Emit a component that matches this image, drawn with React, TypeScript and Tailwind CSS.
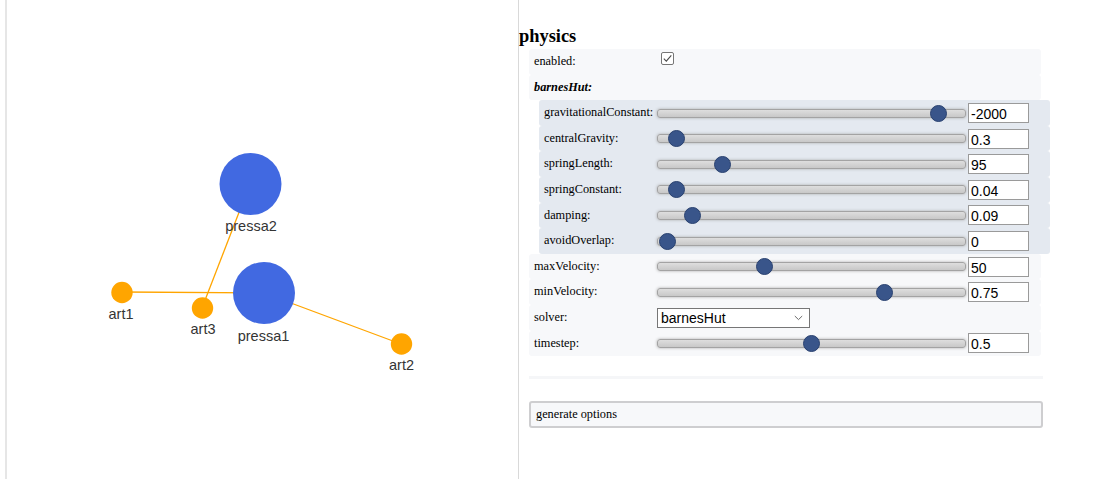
import React from "react";

type Lvl = 1 | 2;

function Row({ level, label, children }: { level: Lvl; label: React.ReactNode; children?: React.ReactNode }) {
  const outer =
    level === 2
      ? "ml-[20px] w-[511px] h-[25.6px] pl-[5px] flex items-center rounded-[3px] bg-[#e4e9f0]"
      : "ml-[10px] w-[512px] h-[25.6px] pl-[5px] flex items-center rounded-[3px] bg-[#f7f8fa]";
  const lab = level === 2 ? "w-[113px] shrink-0 whitespace-nowrap" : "w-[123px] shrink-0 whitespace-nowrap";
  return (
    <div className={outer}>
      <div className={lab}>{label}</div>
      {children}
    </div>
  );
}

function Slider({ center, value }: { center: number; value: string }) {
  const left = center - 657 - 8.5;
  return (
    <div className="flex items-center">
      <div className="relative w-[309px] h-[20px] flex items-center">
        <div className="w-full h-[9px] rounded-[3px] border border-[#a3a3a3] bg-gradient-to-b from-[#dedede] to-[#c8c8c8] shadow-[0_0_3px_0_#aaaaaa]" />
        <div
          className="absolute top-[1.5px] w-[17px] h-[17px] rounded-full bg-[#39558a] border border-[#2a4270]"
          style={{ left }}
        />
      </div>
      <div className="ml-[2px] w-[61px] h-[20px] border border-[#9a9a9a] bg-white pl-[2px] pt-[2px] flex items-center font-['Liberation_Sans',Arial,sans-serif] text-[14px] text-black leading-none">
        {value}
      </div>
    </div>
  );
}

function Checkbox() {
  return (
    <div className="ml-[4px] mb-[7px] w-[13px] h-[13px] rounded-[2px] border border-[#767676] bg-white flex items-center justify-center">
      <svg width="11" height="11" viewBox="0 0 11 11">
        <path d="M1.8 5.6 L4.3 8.1 L9.3 2.4" fill="none" stroke="#4a4a4a" strokeWidth="1.1" />
      </svg>
    </div>
  );
}

function Select() {
  return (
    <div className="w-[153px] h-[20px] border border-[#767676] bg-white pl-[3px] pr-[6px] pt-[1px] flex items-center justify-between font-['Liberation_Sans',Arial,sans-serif] text-[14px] text-black leading-none">
      <span>barnesHut</span>
      <svg width="9" height="6" viewBox="0 0 9 6">
        <path d="M0.8 1 L4.5 4.6 L8.2 1" fill="none" stroke="#6b6b6b" strokeWidth="1" />
      </svg>
    </div>
  );
}

function Graph() {
  const orange = "#ffa500";
  const blue = "#4169e1";
  const labelCls = "font-['Liberation_Sans',Arial,sans-serif]";
  return (
    <svg width="511" height="479" viewBox="7 0 511 479" className="block">
      <line x1="122" y1="292" x2="264" y2="293" stroke={orange} strokeWidth="1.3" />
      <line x1="202" y1="308" x2="250" y2="184" stroke={orange} strokeWidth="1.3" />
      <line x1="264" y1="293" x2="401" y2="344" stroke={orange} strokeWidth="1.3" />
      <circle cx="250.5" cy="184" r="31" fill={blue} />
      <circle cx="264" cy="293" r="31" fill={blue} />
      <circle cx="122" cy="292.5" r="10.7" fill={orange} />
      <circle cx="202.5" cy="308" r="10.7" fill={orange} />
      <circle cx="401.5" cy="344" r="10.7" fill={orange} />
      <g className={labelCls} fontSize="14.5" fill="#343434" textAnchor="middle" dominantBaseline="central">
        <text x="251" y="226">pressa2</text>
        <text x="263.5" y="336">pressa1</text>
        <text x="121" y="314">art1</text>
        <text x="203" y="329">art3</text>
        <text x="401.5" y="365">art2</text>
      </g>
    </svg>
  );
}

export default function App() {
  return (
    <div className="w-[1100px] h-[479px] overflow-hidden bg-white flex">
      <div className="pl-[5px] w-[519px] h-[479px] shrink-0">
        <div className="w-full h-full border-l-2 border-r border-l-[#e6e6e6] border-r-[#d9d9d9]">
          <Graph />
        </div>
      </div>
      <div className="pt-[23.5px] font-['Liberation_Serif','Times_New_Roman',serif] text-[12.3px] text-black leading-[25.6px]">
        <div className="h-[25.6px] text-[18.4px] font-bold">physics</div>
        <Row level={1} label="enabled:">
          <Checkbox />
        </Row>
        <Row level={1} label={<b><i>barnesHut:</i></b>} />
        <Row level={2} label="gravitationalConstant:">
          <Slider center={938} value="-2000" />
        </Row>
        <Row level={2} label="centralGravity:">
          <Slider center={676} value="0.3" />
        </Row>
        <Row level={2} label="springLength:">
          <Slider center={722} value="95" />
        </Row>
        <Row level={2} label="springConstant:">
          <Slider center={676} value="0.04" />
        </Row>
        <Row level={2} label="damping:">
          <Slider center={692} value="0.09" />
        </Row>
        <Row level={2} label="avoidOverlap:">
          <Slider center={667} value="0" />
        </Row>
        <Row level={1} label="maxVelocity:">
          <Slider center={764} value="50" />
        </Row>
        <Row level={1} label="minVelocity:">
          <Slider center={884} value="0.75" />
        </Row>
        <Row level={1} label="solver:">
          <Select />
        </Row>
        <Row level={1} label="timestep:">
          <Slider center={811} value="0.5" />
        </Row>
        <div className="ml-[10px] mt-[20px] w-[514px] h-[3px] bg-[#f5f6f8]" />
        <div className="ml-[10px] mt-[21.5px] w-[514px] h-[27px] border-2 border-[#ceced0] rounded-[3px] bg-[#f7f8fa] pl-[5px] leading-[23px]">
          generate options
        </div>
      </div>
    </div>
  );
}
